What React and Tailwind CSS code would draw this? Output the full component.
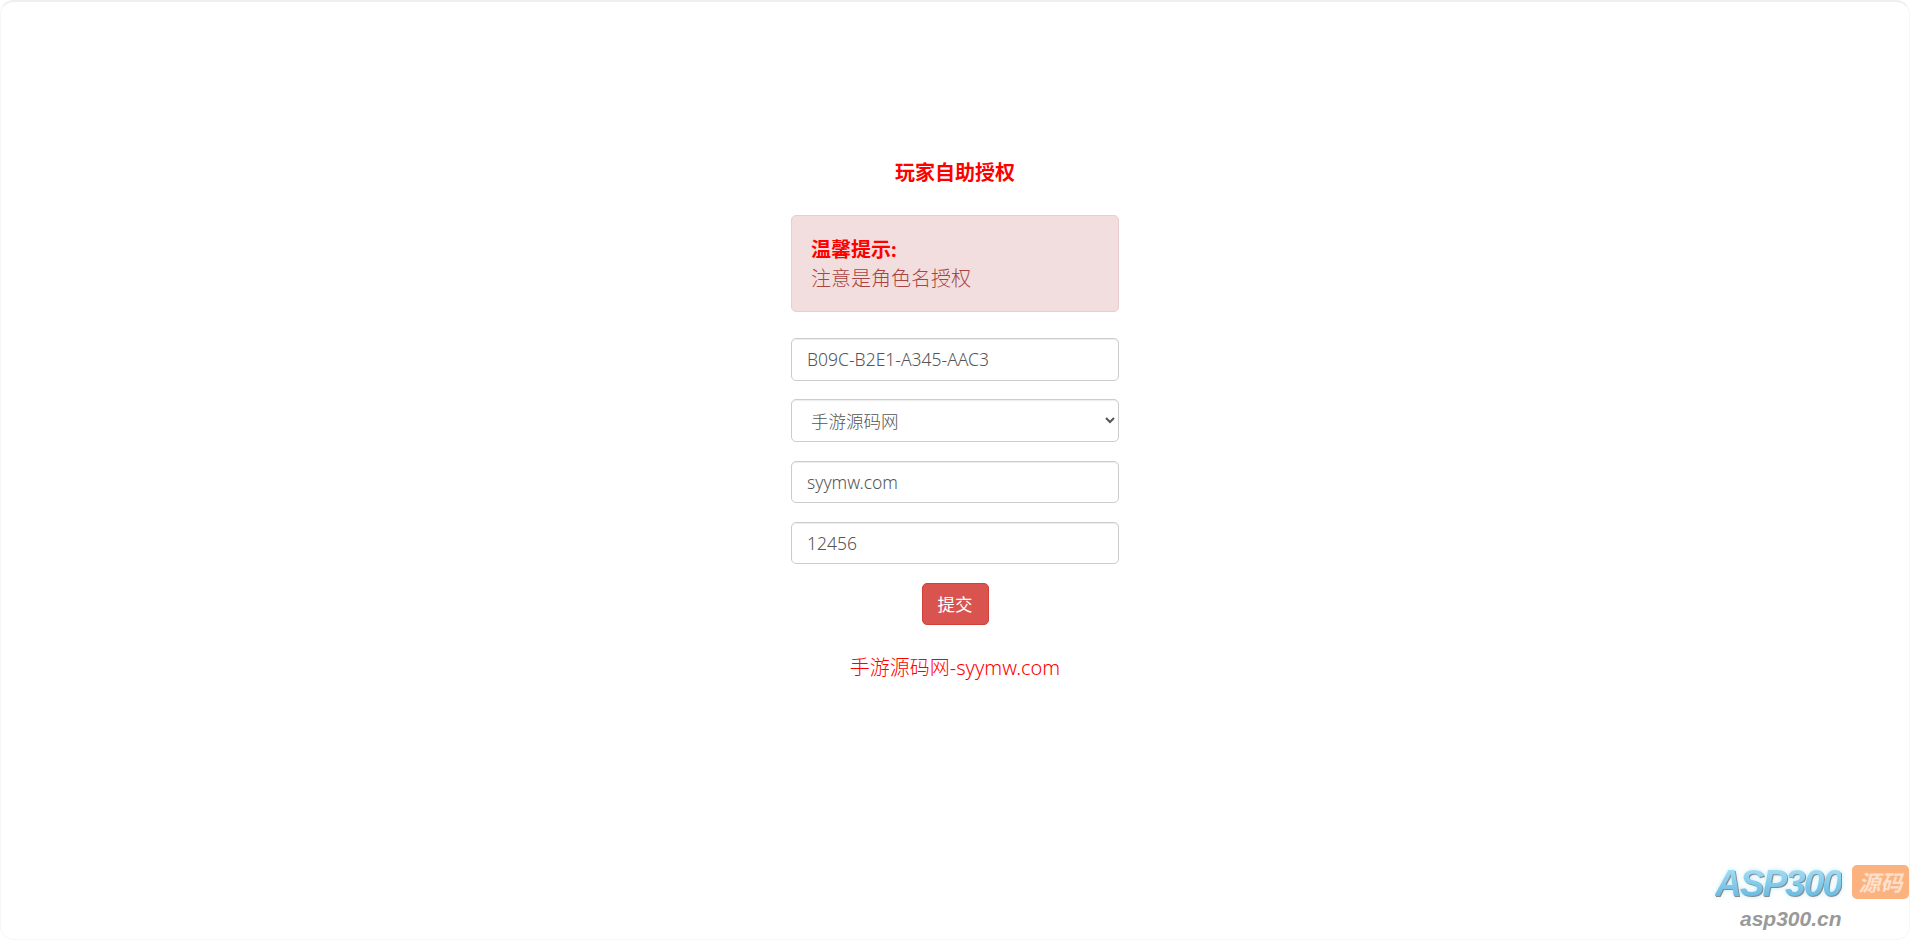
const cjk = '[font-family:"Noto_Sans","Noto_Sans_CJK_SC",sans-serif]'

const inputCls = 'h-[42.5px] w-full rounded-[5px] border border-[#ccc] px-[15px] text-[17.5px] text-[#555] shadow-[inset_0_1px_1px_rgba(0,0,0,0.075)] outline-none'

export default function App() {
  return (
    <div className={`relative h-screen w-full overflow-hidden rounded-[14px] border-x border-t-2 border-b border-x-[#f6f6f6] border-t-[#efefef] border-b-[#f6f6f6] bg-white pt-[157px] font-light text-[#555] ${cjk}`}>
      <div className="mx-auto flex w-[328px] flex-col">
        <h3 className="text-center text-[20px] leading-[28px] font-bold text-[#ff0000]">玩家自助授权</h3>

        <div className="mt-[28px] mb-[26px] rounded-[5px] border border-[#ebccd1] bg-[#f2dede] pt-[19px] pr-[20px] pb-[18px] pl-[19px] text-[20px] leading-[29px] text-[#a94442]">
          <strong className="block font-bold text-[#ff0000]">温馨提示:</strong>
          注意是角色名授权
        </div>

        <div className="flex flex-col gap-[18.75px]">
          <input defaultValue="B09C-B2E1-A345-AAC3" className={inputCls} />
          <select defaultValue="手游源码网" className={`${inputCls} bg-white`}>
            <option>手游源码网</option>
          </select>
          <input defaultValue="syymw.com" className={inputCls} />
          <input defaultValue="12456" className={inputCls} />
          <button className="mx-auto h-[42px] w-[67px] rounded-[5px] border border-[#d43f3a] bg-[#d9534f] text-[17.5px] font-normal text-white">提交</button>
        </div>

        <p className="mt-[29px] text-center text-[20px] leading-[28px] text-[#ff0000]">手游源码网-syymw.com</p>
      </div>

      {/* watermark */}
      <div className="absolute right-0 bottom-0 h-[74px] w-[200px]">
        <span className="absolute top-0 left-[6px] bg-gradient-to-b from-[#a8e2f7] to-[#5fb4de] bg-clip-text text-[37px] leading-[37px] font-bold tracking-[-2px] text-transparent italic [filter:drop-shadow(1px_1px_0_#8a8a8a)_drop-shadow(0_0_2px_#bfeaf8)] [font-family:'Liberation_Sans',sans-serif]">ASP300</span>
        <span className="absolute top-0 right-0 flex h-[34px] w-[57px] items-center justify-center rounded-[5px] bg-[#fbb27e] text-[22px] font-bold text-[#fde0cc] italic">源码</span>
        <span className="absolute top-[42px] left-[31px] text-[21px] leading-[24px] font-bold text-[#999] italic [font-family:'Liberation_Sans',sans-serif]">asp300.cn</span>
      </div>
    </div>
  )
}
